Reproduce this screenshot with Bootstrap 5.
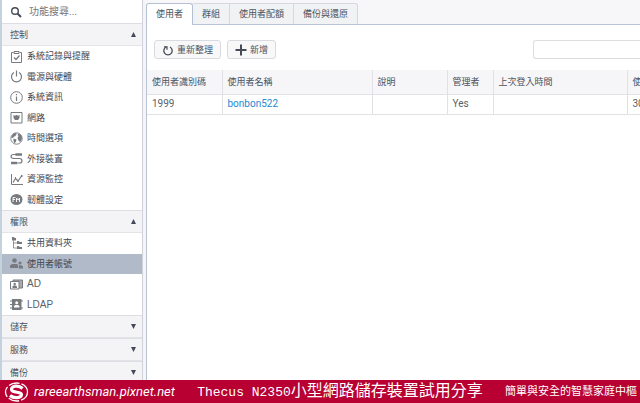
<!DOCTYPE html>
<html lang="zh-Hant">
<head>
<meta charset="utf-8">
<meta name="viewport" content="width=device-width, initial-scale=1">
<title>使用者帳號</title>
<link href="https://cdn.jsdelivr.net/npm/bootstrap@5.3.0/dist/css/bootstrap.min.css" rel="stylesheet">
<style>
body{font-family:Roboto,"Noto Sans CJK TC",sans-serif;font-size:9px;line-height:12px;color:#4c525c;background:#fff}
.side-col{flex:0 0 143px;border-left:2px solid #c3d2dc;border-right:1px solid #cfd2d9}
.gutter{flex:0 0 3px;background:#f5f5f8}
.side-search{height:23px;padding-left:8px}
.side-search input{font-size:10px;line-height:12px;color:#555;margin-left:7px;outline:0}
.side-search input::placeholder{color:#707580;opacity:1}
.side-head{height:23px;padding:0 6px 0 8px;background:#f4f4f6;border:0;border-top:1px solid #dcdee3;border-bottom:1px solid #e3e4e8;color:#4c525c;text-align:left}
.side-head svg{width:5px;height:5px;fill:#424a56}
.side-list.long{min-height:164px}
.side-list.short{min-height:82px}
.side-list a{padding-left:8px;color:#3f454f;text-decoration:none}
.side-list svg{width:13px;height:13px;margin-right:4px;color:#777b80}
.side-list .chosen{background:#b0bac9}
.side-list .latin{font-family:"Liberation Sans",sans-serif;font-size:10px;color:#5c6066}
.tab-strip{padding-top:3px;background:#f7f7fa;border-bottom:1px solid #b9c3d6}
.tab-strip .nav-link{height:21px;padding:0 9px;border:1px solid #d5d8df;border-left:0;border-radius:0;background:#f1f2f4;color:#4c525c;line-height:20px;border-bottom:0}
.tab-strip .nav-item:last-child .nav-link{border-top-right-radius:3px}
.tab-strip .nav-link.active{height:22px;margin-bottom:-1px;background:#fff;border-color:#b4c0d4;border-left:1px solid #b4c0d4;border-radius:3px 3px 0 0;color:#4c525c}
.main-col{min-width:0}
.pane{border-left:1px solid #b9c3d6}
.tools{height:45px;padding:4px 0 0 7px;gap:6px}
.tool{height:19px;padding:0 7px;border:1px solid #d9dbe0;border-radius:3px;background:#f8f8f9;color:#4c525c;font-size:9px;line-height:12px}
.tool svg{width:12px;height:12px;margin-right:3px;color:#464c56}
.filter{width:107px;height:19px;border:1px solid #dcdee2;border-right:0;border-radius:3px 0 0 3px;font-size:9px}
.users{table-layout:fixed;width:100%;white-space:nowrap}
.users th,.users td{padding:0 5px;border-right:1px solid #dfe1e5;border-bottom:1px solid #e0e2e6;overflow:hidden}
.users th:last-child,.users td:last-child{border-right:0}
.users th{height:24px;background:#f6f6f9;font-weight:400}
.users td{height:20px;color:#5b5f67;font-size:10px}
.users a{color:#2389d2;text-decoration:none}
.c-id{width:75px}.c-name{width:150px}.c-note{width:75px}.c-admin{width:46px}.c-login{width:134px}
.brand-bar{height:23px;background:#b80032;color:#fff;white-space:nowrap;padding:0 3px 0 4px}
.brand-bar svg{width:26px;height:20px;margin-right:4px}
.site{font-family:Roboto,sans-serif;font-style:italic;font-size:13px;color:#fff;text-decoration:none}
.headline{font-size:16px;line-height:20px}
.headline span{font-family:"Liberation Mono",monospace;font-size:13px}
.motto{font-size:11px}
</style>
<script src="https://cdn.jsdelivr.net/npm/bootstrap@5.3.0/dist/js/bootstrap.bundle.min.js"></script>
</head>
<body class="vh-100 d-flex flex-column overflow-hidden">
<div class="d-flex flex-fill overflow-hidden">
  <nav class="side-col overflow-hidden">
    <label class="side-search d-flex align-items-center">
      <svg width="12" height="12" viewBox="0 0 12 12" fill="none" stroke="#454b55"><circle cx="5" cy="5" r="3.3" stroke-width="1.4"/><path d="M7.5 7.5 11 11" stroke-width="2"/></svg>
      <input class="border-0 p-0 w-75" type="text" placeholder="功能搜尋..." aria-label="功能搜尋">
    </label>
    <button class="side-head d-flex w-100 align-items-center justify-content-between" type="button">控制<svg viewBox="0 0 6 6"><path d="M3 0 6 6H0z"/></svg></button>
    <ul class="side-list long list-unstyled m-0 d-flex flex-column">
      <li class="d-flex flex-fill"><a class="d-flex flex-fill align-items-center" href="#"><svg viewBox="0 0 13 13" fill="none" stroke="currentColor"><path d="M3.5 2.5h-2v10h10v-10h-2M4 1.5h5v2H4z"/><path d="m4 7.5 2 2 3.5-4" stroke-width="1.3"/></svg>系統記錄與提醒</a></li>
      <li class="d-flex flex-fill"><a class="d-flex flex-fill align-items-center" href="#"><svg viewBox="0 0 13 13" fill="none" stroke="currentColor" stroke-width="1.2"><path d="M6.5.5v6M4 2.5a5 5 0 1 0 5 0"/></svg>電源與硬體</a></li>
      <li class="d-flex flex-fill"><a class="d-flex flex-fill align-items-center" href="#"><svg viewBox="0 0 13 13" fill="none" stroke="currentColor"><circle cx="6.5" cy="6.5" r="5.8"/><path d="M6.5 5.5V10M6.500 3v1.3" stroke-width="1.2"/></svg>系統資訊</a></li>
      <li class="d-flex flex-fill"><a class="d-flex flex-fill align-items-center" href="#"><svg viewBox="0 0 13 13"><path d="M1 1.5h11V12H1z" fill="none" stroke="currentColor"/><path d="M3.500 4h1v1h1V4h2v1h1V4h1v3L8 9H5L3.500 7z" fill="currentColor"/></svg>網路</a></li>
      <li class="d-flex flex-fill"><a class="d-flex flex-fill align-items-center" href="#"><svg viewBox="0 0 13 13"><circle cx="6.5" cy="6.5" r="5.7" fill="#fff" stroke="currentColor" stroke-width=".9"/><path d="M1.500 4.500 3.500 1.500 6 1 7 2 5.500 3 6 4 4 4.500 3 6 1.500 6zM3.500 6.500 6.500 7.500 6 9.500 4.500 11.500 3.500 9zM8.500 1.500 11 3 12 5.500 11.500 8 10 10 8.500 8.500 7.500 6 8.500 4 7.500 3z" fill="currentColor"/></svg>時間選項</a></li>
      <li class="d-flex flex-fill"><a class="d-flex flex-fill align-items-center" href="#"><svg viewBox="0 0 13 13" fill="none" stroke="currentColor"><path d="M7 2.500H3.500C.2 2.500.2 6.500 3.500 6.500H9.500c3.300 0 3.300 4.500 0 4.500H6" stroke-width="1.200"/><path d="M5.500 2.500H12M1 11h6" stroke-width="2.600"/></svg>外接裝置</a></li>
      <li class="d-flex flex-fill"><a class="d-flex flex-fill align-items-center" href="#"><svg viewBox="0 0 13 13" fill="none" stroke="currentColor"><path d="M1.5 1v10.500H13"/><path d="m3 9.500 2.500-4L8 8l3.500-5" stroke-width="1.2"/><path d="M5 5h1M7.500 8h1M11 3h1.500" stroke-width="2"/></svg>資源監控</a></li>
      <li class="d-flex flex-fill"><a class="d-flex flex-fill align-items-center" href="#"><svg viewBox="0 0 13 13"><ellipse cx="6.5" cy="6.5" rx="6" ry="5.5" fill="currentColor"/><path d="M3 9V4.500h2.500M3 6.500h2M6.500 9V5L8 7l1.500-2v4" fill="none" stroke="#fff" stroke-width=".9"/></svg>韌體設定</a></li>
    </ul>
    <button class="side-head d-flex w-100 align-items-center justify-content-between" type="button">權限<svg viewBox="0 0 6 6"><path d="M3 0 6 6H0z"/></svg></button>
    <ul class="side-list short list-unstyled m-0 d-flex flex-column">
      <li class="d-flex flex-fill"><a class="d-flex flex-fill align-items-center" href="#"><svg viewBox="0 0 13 13"><path d="M2 0h2l.5 1H6v2.500H2zM7 4h2l.5 1H12v2H7zM7 9h2l.5 1H12v2H7z" fill="currentColor"/><path d="M3.500 3.500v7.500H7M3.500 6H7" fill="none" stroke="currentColor" stroke-width=".8"/></svg>共用資料夾</a></li>
      <li class="d-flex flex-fill chosen"><a class="d-flex flex-fill align-items-center" href="#" aria-current="page"><svg viewBox="0 0 13 13" fill="currentColor"><circle cx="4.500" cy="3.500" r="2.300"/><path d="M0 11V8.500l2-1.500h5l1 1v3z"/><circle cx="10" cy="6" r="1.600"/><path d="M8.800 11.500V8.300h2.700L13 9.500v2z"/></svg>使用者帳號</a></li>
      <li class="d-flex flex-fill"><a class="d-flex flex-fill align-items-center latin" href="#"><svg viewBox="0 0 13 13"><path d="M3 2h9.500v8H3z" fill="#aaa" stroke="currentColor"/><path d="M.5 3.500H9V11H.5z" fill="#fff" stroke="currentColor"/><circle cx="4.700" cy="6" r="1.200" fill="currentColor"/><path d="M2.500 10V8.500l1-1H6l1 1V10z" fill="currentColor"/></svg>AD</a></li>
      <li class="d-flex flex-fill"><a class="d-flex flex-fill align-items-center latin" href="#"><svg viewBox="0 0 13 13"><path d="M2 1h9.500v11H2z" fill="currentColor"/><path d="M0 3h3M0 6.500h3M0 10h3M11 3h2M11 10h2" stroke="currentColor"/><circle cx="6.700" cy="4.700" r="1.500" fill="#fff"/><path d="M4 9.500V8l1.200-1h3l1.200 1v1.500z" fill="#fff"/></svg>LDAP</a></li>
    </ul>
    <button class="side-head d-flex w-100 align-items-center justify-content-between" type="button">儲存<svg viewBox="0 0 6 6"><path d="M3 6 6 0H0z"/></svg></button>
    <button class="side-head d-flex w-100 align-items-center justify-content-between" type="button">服務<svg viewBox="0 0 6 6"><path d="M3 6 6 0H0z"/></svg></button>
    <button class="side-head d-flex w-100 align-items-center justify-content-between" type="button">備份<svg viewBox="0 0 6 6"><path d="M3 6 6 0H0z"/></svg></button>
  </nav>
  <div class="gutter"></div>
  <main class="main-col flex-fill d-flex flex-column">
    <ul class="tab-strip nav flex-nowrap">
      <li class="nav-item"><a class="nav-link active" href="#" aria-current="page">使用者</a></li>
      <li class="nav-item"><a class="nav-link" href="#">群組</a></li>
      <li class="nav-item"><a class="nav-link" href="#">使用者配額</a></li>
      <li class="nav-item"><a class="nav-link" href="#">備份與還原</a></li>
    </ul>
    <div class="pane flex-fill">
      <div class="tools d-flex align-items-center">
        <button class="tool btn d-flex align-items-center" type="button"><svg viewBox="0 0 12 12" fill="none" stroke="currentColor" stroke-width="1.3"><path d="M8 3a4.200 4.200 0 1 1-4 0"/><path d="M2 2.800h3v3" stroke-width="1.200"/></svg>重新整理</button>
        <button class="tool btn d-flex align-items-center" type="button"><svg viewBox="0 0 12 12" stroke="currentColor" stroke-width="2"><path d="M6 .5v11M.5 6h11"/></svg>新增</button>
        <input class="filter ms-auto" type="text" aria-label="篩選使用者">
      </div>
      <table class="users">
        <colgroup><col class="c-id"><col class="c-name"><col class="c-note"><col class="c-admin"><col class="c-login"><col></colgroup>
        <thead><tr><th scope="col">使用者識別碼</th><th scope="col">使用者名稱</th><th scope="col">說明</th><th scope="col">管理者</th><th scope="col">上次登入時間</th><th scope="col" class="pe-0">使</th></tr></thead>
        <tbody><tr><td>1999</td><td><a href="#">bonbon522</a></td><td></td><td>Yes</td><td></td><td class="pe-0">30</td></tr></tbody>
      </table>
    </div>
  </main>
</div>
<footer class="brand-bar d-flex align-items-center justify-content-between">
  <div class="d-flex align-items-center">
    <svg viewBox="0 0 26 20"><ellipse cx="12.5" cy="10" rx="11" ry="9" fill="none" stroke="#fff" stroke-width="1.300" stroke-dasharray="11 2"/><path d="M18.500 6.500C15 3 7 3.500 7.500 7.500S17.500 9 17.500 12.500 10 17 6 13.500" fill="none" stroke="#fff" stroke-width="3.200"/></svg>
    <a class="site" href="#">rareearthsman.pixnet.net</a>
  </div>
  <div class="headline"><span>Thecus N2350</span>小型網路儲存裝置試用分享</div>
  <div class="motto">簡單與安全的智慧家庭中樞</div>
</footer>
</body>
</html>
